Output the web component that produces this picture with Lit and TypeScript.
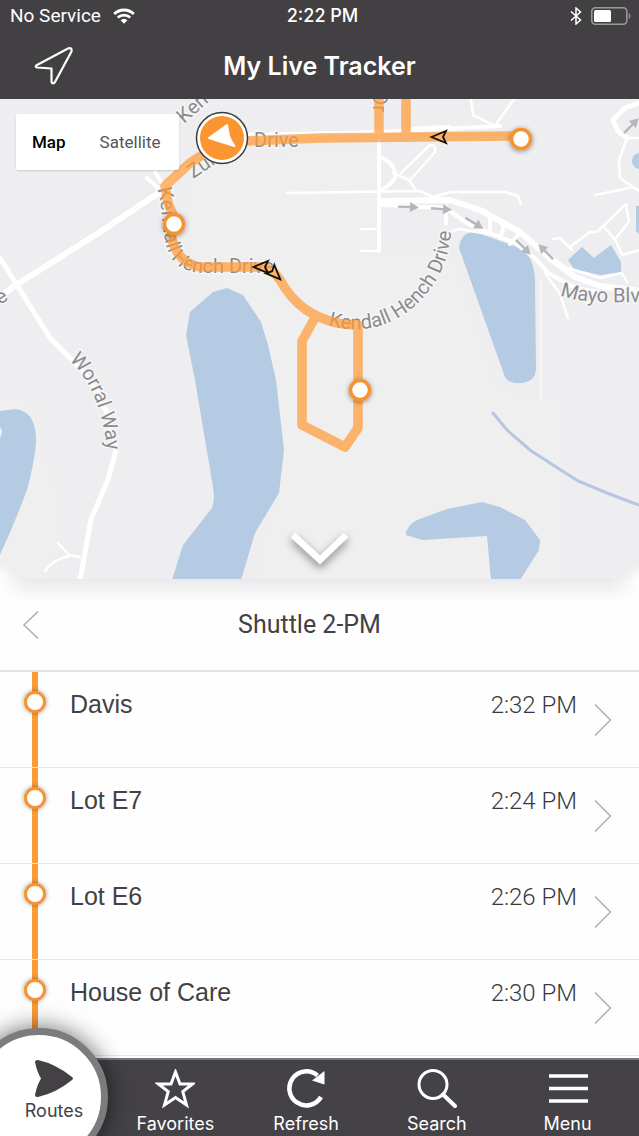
import { LitElement, html, svg, css } from "lit";
import { customElement, property, state } from "lit/decorators.js";
import { classMap } from "lit/directives/class-map.js";

interface Stop {
  name: string;
  time: string;
}

const STOPS: Stop[] = [
  { name: "Davis", time: "2:32 PM" },
  { name: "Lot E7", time: "2:24 PM" },
  { name: "Lot E6", time: "2:26 PM" },
  { name: "House of Care", time: "2:30 PM" },
];

@customElement("status-bar")
class StatusBar extends LitElement {
  static styles = css`
    :host {
      display: grid;
      grid-template-columns: 1fr auto 1fr;
      align-items: center;
      height: 32px;
      padding: 0 4px 0 10px;
      color: #fff;
      font: 400 18px/24px Inter, "Liberation Sans", sans-serif;
    }
    .side {
      display: flex;
      align-items: center;
      gap: 12px;
    }
    .end {
      justify-content: flex-end;
      gap: 9px;
      padding-right: 4px;
    }
    .carrier {
      font-family: Roboto, sans-serif;
      font-size: 19px;
    }
    .clock {
      font-weight: 500;
    }
    svg {
      display: block;
    }
  `;
  render() {
    return html`
      <div class="side">
        <span class="carrier">No Service</span>
        <svg width="22" height="16" viewBox="0 0 22 16" fill="none" stroke="#fff" stroke-width="2.8" aria-label="Wi-Fi">
          <path d="M1.2 6A14 14 0 0 1 20.800 6" />
          <path d="M4.800 9.600A9 9 0 0 1 17.200 9.600" />
          <path d="M11 15.800L7.600 12.300A5 5 0 0 1 14.400 12.300Z" fill="#fff" stroke="none" />
        </svg>
      </div>
      <time class="clock">2:22 PM</time>
      <div class="side end">
        <svg width="12" height="18" viewBox="0 0 12 18" fill="none" stroke="#fff" stroke-width="1.500" aria-label="Bluetooth">
          <path d="M1 4.500L10.500 13L6 17V1L10.500 5L1 13.500" />
        </svg>
        <svg width="40" height="18" viewBox="0 0 40 18" fill="none" aria-label="Battery">
          <rect x="0.800" y="0.800" width="35" height="16.400" rx="3.500" stroke="#9b999c" stroke-width="1.500" />
          <rect x="3" y="3" width="17" height="12" rx="1.500" fill="#fff" />
          <path d="M37.800 6V12C39.800 11 39.800 7 37.800 6Z" fill="#9b999c" />
        </svg>
      </div>
    `;
  }
}

@customElement("route-map")
class RouteMap extends LitElement {
  @state() private view = "Map";

  static styles = css`
    :host {
      display: block;
      position: relative;
      overflow: hidden;
      background: #eeedef;
      min-height: 240px;
    }
    .canvas {
      position: absolute;
      inset: 0;
      width: 100%;
      height: 100%;
    }
    .label {
      font: 400 20px Roboto, sans-serif;
      fill: #8b8b8d;
      stroke: #f6f6f7;
      stroke-width: 3px;
      paint-order: stroke;
    }
    .views {
      position: absolute;
      left: 16px;
      top: 15px;
      display: flex;
      background: #fff;
      border-radius: 2px;
      box-shadow: 0 1px 2px rgba(0, 0, 0, 0.15);
    }
    .view {
      border: 0;
      background: none;
      padding: 16px;
      color: #565656;
      font: 400 17px/24px Roboto, sans-serif;
    }
    .view:last-child {
      padding: 16px 18px;
    }
    .view.on {
      color: #000;
      font-weight: 500;
    }
    .collapse {
      position: absolute;
      left: 0;
      right: 0;
      bottom: 6px;
      width: 72px;
      margin: 0 auto;
      padding: 0;
      border: 0;
      background: none;
    }
    .collapse svg {
      display: block;
      width: 72px;
      height: 48px;
      filter: drop-shadow(0 4px 4px rgba(0, 0, 0, 0.45));
    }
  `;

  private stop(x: number, y: number) {
    return svg`<g filter="url(#soft)"><circle cx=${x} cy=${y} r="9.500" fill="#fff" stroke="#f6932f" stroke-width="3.500"/></g>`;
  }

  private oneWay(x: number, y: number, angle: number) {
    return svg`<path transform="translate(${x} ${y}) rotate(${angle})" d="M-10 -1.200H2V-5L11 0L2 5V1.200H-10Z" fill="#b4b8bd"/>`;
  }

  private heading(x: number, y: number, angle: number) {
    return svg`<path transform="translate(${x} ${y}) rotate(${angle})" d="M-7.500 0L7 -6L4 0L7 6Z" fill="none" stroke="#17120c" stroke-width="1.800"/>`;
  }

  render() {
    return html`
      <svg class="canvas" viewBox="0 99 639 480" preserveAspectRatio="xMidYMid slice" role="img" aria-label="Route map">
        <defs>
          <filter id="soft" x="-60%" y="-60%" width="220%" height="220%">
            <feDropShadow dx="0" dy="1" stdDeviation="2.500" flood-color="#000" flood-opacity="0.450" />
          </filter>
          <path id="hench-west" d="M156 186C163 202 161 222 165 240C169 264 184 273 206 273H300" />
          <path id="hench-east" d="M328 325C362 335 392 327 417 304C440 282 451 256 452 220" />
          <path id="worral" d="M69 360C88 377 104 407 108 460" />
          <path id="mayo" d="M560 295C578 302 600 304 670 301" />
        </defs>

        <g fill="#efefef">
          <path d="M190 160L380 145V250L452 256L500 390L560 400V579H255L284 450L262 325L190 260Z" />
          <path d="M0 400H30L65 520L50 579H0Z" />
        </g>

        <g fill="#b5cae3">
          <path d="M190 312L213 292L227 288L243 295L261 322L268 345L276 380L284 450L279 493L255 533L241 580H172L183 545L212 508Q215 500 213 487L195 380L186 335Z" />
          <path d="M0 411L15 409Q28 410 33 422Q36 430 36 440Q36 455 27 490Q15 522 0 555V438Q4 432 0 427Z" />
          <path d="M459 248Q460 239 465 235Q470 231 478 233L517 247Q529 253 532 263Q535 272 535 280L536 370Q535 381 523 383H515Q508 382 505 377Z" />
          <path d="M406 532Q410 523 417 520L447 509L482 502L500 507L525 520L540 540L539 550L520 580H491L487 536L422 540L406 535Z" />
          <path d="M568 260L582 247L594 258L611 245L621 262V272L600 275L574 269Z" />
          <circle cx="640" cy="161" r="8" />
          <path d="M636 206H640V235L636 231Z" />
        </g>
        <path d="M493 413L507 430L530 450L553 465L578 481L607 493L639 505" fill="none" stroke="#b6c6e2" stroke-width="3" stroke-linecap="round" />

        <g fill="none" stroke="#fff" stroke-linecap="round" stroke-linejoin="round">
          <g stroke-width="6">
            <path d="M-4 299L16 285L100 232L157 194L188 166" />
            <path d="M0 258L17 285L50 338L74 362Q108 395 116 450L108 480L91 519L80 580" stroke-width="5" />
            <path d="M382 201L450 200L480 210L520 232L550 258L575 277L600 286L640 291" />
            <path d="M639 103L625 108L613 120L618 131L627 138" stroke-width="5" />
          </g>
          <g stroke-width="4">
            <path d="M379 140V251" />
            <path d="M382 205L445 208L470 225L515 243L535 258L548 273L575 288L600 292" />
            <path d="M446 207V224M490 218L490 232M505 223L500 238M520 233L510 244" />
            <path d="M147 178L160 190M155 172L164 186" />
            <path d="M240 135L380 132L500 126" />
            <path d="M382 158Q397 165 395 178Q390 186 381 190" />
          </g>
          <g stroke-width="2.500">
            <path d="M361 251H380M361 229H376" />
            <path d="M287 193L420 191L433 197L450 192H505L518 196L521 204" />
            <path d="M471 99L473 115L495 126L514 99M414 128L450 126" />
            <path d="M401 173L430 145Q436 144 435 152L411 179M393 173L409 180L415 189" />
            <path d="M627 138H640M627 138L619 160L620 178L634 188L640 191M595 195L634 187" />
            <path d="M570 247L590 232L597 232L626 204L629 222L615 239L622 255L640 250M605 228L615 240" />
            <path d="M553 239L560 238L572 250M568 268L600 278L622 273L627 282" />
            <path d="M545 273L560 294L568 318" />
            <path d="M450 232L459 229L500 236" />
            <path d="M58 543L69 555L80 557M45 571Q52 560 69 556" />
          </g>
          <path d="M541 280V400" stroke-width="1" />
        </g>

        ${this.oneWay(408, 207, 2)} ${this.oneWay(441, 209, 4)} ${this.oneWay(474, 223, 31)}
        ${this.oneWay(523, 247, 45)} ${this.oneWay(546, 252, 225)} ${this.oneWay(631, 126, -45)}

        <g class="label">
          <text transform="translate(184 124) rotate(-42)">Ken</text>
          <text transform="translate(193 179) rotate(-34)">Zum</text>
          <text x="254" y="147">Drive</text>
          <text transform="translate(373 92) rotate(90)">Dr</text>
          <text transform="translate(0 305) rotate(-32)">e</text>
          <text><textPath href="#hench-west" startOffset="3">Kendall Hench Drive</textPath></text>
          <text><textPath href="#hench-east">Kendall Hench Drive</textPath></text>
          <text><textPath href="#worral">Worral Way</textPath></text>
          <text><textPath href="#mayo">Mayo Blvd</textPath></text>
        </g>

        <g fill="none" stroke="#ff9a36" stroke-width="9.500" stroke-linejoin="round" opacity="0.720">
          <path d="M521 136L420 137L320 138L222 142L190 163L165 186L168 203L173 215Q169 236 175 248Q183 264 200 267H262Q272 268 280 280Q290 298 305 309Q328 325 358 325V428L345 447L302 425V341L316 316M379 99V133M406 99V133" />
        </g>

        ${this.heading(439, 137, 0)} ${this.heading(261, 267, 0)} ${this.heading(275, 274, 225)}
        ${this.stop(521, 139)} ${this.stop(174, 224)} ${this.stop(360, 390)}

        <circle cx="222" cy="138" r="25.500" fill="#fff" stroke="#3c3a3c" stroke-width="1.500" />
        <circle cx="222" cy="138" r="22" fill="#fb952f" />
        <path d="M209 138L227 125Q228 131 229 136Q231 141 234.500 146Q221 142 209 138Z" fill="#fff" stroke="#fff" stroke-width="2" stroke-linejoin="round" />
      </svg>

      <div class="views">
        ${["Map", "Satellite"].map(
          (name) => html`<button class=${classMap({ view: true, on: this.view === name })} @click=${() => (this.view = name)}>${name}</button>`
        )}
      </div>
      <button class="collapse" aria-label="Collapse map">
        <svg viewBox="0 0 72 48" fill="none" stroke="#fff" stroke-width="6.500">
          <path d="M9 10L36 35L62 10" />
        </svg>
      </button>
    `;
  }
}

@customElement("stop-list")
class StopList extends LitElement {
  @property({ attribute: false }) stops: Stop[] = [];

  static styles = css`
    :host {
      display: block;
      position: relative;
      background: #fefefe;
      color: #434144;
    }
    .fade {
      position: absolute;
      left: 0;
      right: 0;
      top: 0;
      height: 24px;
      background: linear-gradient(#eaeaec, #fefefe);
      mask-image: linear-gradient(to right, transparent, #000 28px, #000 calc(100% - 28px), transparent);
    }
    .corners {
      position: absolute;
      left: 0;
      right: 0;
      top: -16px;
      height: 16px;
      background: radial-gradient(circle at 0 100%, #fff, transparent 15px), radial-gradient(circle at 100% 100%, #fff, transparent 15px);
    }
    .head {
      position: relative;
      display: grid;
      grid-template-columns: 50px 1fr 70px;
      align-items: center;
      height: 91px;
      border-bottom: 2px solid #e3e2e6;
    }
    .back {
      border: 0;
      padding: 0 0 0 22px;
      background: none;
    }
    svg {
      display: block;
      fill: none;
      stroke: #aeadb2;
      stroke-width: 1.5;
    }
    .title {
      margin: 0;
      text-align: center;
      font: 400 25px/32px Roboto, sans-serif;
    }
    .rows {
      margin: 0;
      padding: 0 0 2px;
      list-style: none;
    }
    .row {
      display: grid;
      grid-template-columns: 70px 1fr auto 62px;
      box-sizing: border-box;
      height: 96px;
      border-bottom: 1px solid #e6e5e9;
      color: inherit;
      text-decoration: none;
    }
    .track {
      display: flex;
      justify-content: center;
      width: 6px;
      margin-left: 32px;
      background: #fa9c3a;
    }
    .dot {
      flex: none;
      box-sizing: border-box;
      width: 22px;
      height: 22px;
      margin-top: 19px;
      border: 3px solid #f6952f;
      border-radius: 50%;
      background: #fff;
      box-shadow: 0 0 5px rgba(0, 0, 0, 0.4);
    }
    .name {
      padding-top: 16px;
      font: 400 25px/32px "Liberation Sans", Arial, sans-serif;
    }
    .time {
      padding-top: 17px;
      color: #39373a;
      font: 300 24px/32px Roboto, sans-serif;
    }
    .go {
      align-self: center;
      margin-left: 17px;
    }
  `;

  render() {
    return html`
      <div class="corners"></div>
      <div class="fade"></div>
      <div class="head">
        <button class="back" aria-label="Previous route">
          <svg width="17" height="28" viewBox="0 0 17 28"><path d="M16 0.500L2 14L16 27.500" /></svg>
        </button>
        <h2 class="title">Shuttle 2-PM</h2>
      </div>
      <ul class="rows">
        ${this.stops.map(
          (stop) => html`<li>
            <a class="row" href="#">
              <span class="track"><span class="dot"></span></span>
              <span class="name">${stop.name}</span>
              <span class="time">${stop.time}</span>
              <svg class="go" width="18" height="32" viewBox="0 0 18 32"><path d="M1 0.500L16.500 16L1 31.500" /></svg>
            </a>
          </li>`
        )}
      </ul>
    `;
  }
}

const TABS = [
  {
    label: "Favorites",
    icon: svg`<path d="M20.500 3L25 15H37.500L27.800 22.600L31.500 36L20.500 28.500L9.500 36L13.200 22.600L3.500 15H16Z" stroke-width="3"/>`,
  },
  {
    label: "Refresh",
    icon: svg`<path d="M35 28A17 17 0 1 1 31.500 6.500" stroke-width="4.500"/><path d="M38.500 2V15.500L26 11.500Z" fill="#fff" stroke="none"/>`,
  },
  {
    label: "Search",
    icon: svg`<circle cx="16" cy="15.500" r="14" stroke-width="3"/><path d="M26 25.500L38 37" stroke-width="4" stroke-linecap="round"/>`,
  },
  {
    label: "Menu",
    icon: svg`<path d="M1 7H40M1 19.500H40M1 32H40" stroke-width="3.500"/>`,
  },
];

@customElement("tab-bar")
class TabBar extends LitElement {
  static styles = css`
    :host {
      display: block;
      position: relative;
      color: #fff;
      background: #444246;
      font: 400 18px/22px Inter, sans-serif;
    }
    .bar {
      position: relative;
      display: grid;
      grid-template-columns: 110px repeat(4, 1fr);
      height: 78px;
      padding-right: 6px;
      overflow: clip;
      overflow-clip-margin: 80px;
      box-sizing: border-box;
      border-top: 2px solid #79777b;
    }
    .tab {
      display: flex;
      flex-direction: column;
      align-items: center;
      gap: 4px;
      padding: 9px 0 0;
      border: 0;
      background: none;
      color: inherit;
      font: inherit;
    }
    .icon {
      display: block;
      width: 40px;
      height: 40px;
      fill: none;
      stroke: #fff;
    }
    .bubble {
      position: absolute;
      left: -30px;
      top: -32px;
      width: 138px;
      height: 138px;
      box-sizing: border-box;
      border: 7px solid #7c7b7d;
      border-radius: 50%;
      background: #fff;
      box-shadow: 0 0 24px rgba(0, 0, 0, 0.6);
    }
    .current {
      position: relative;
      padding: 0 2px 15px 0;
      justify-content: center;
      color: #434144;
      gap: 2px;
    }
    .pointer {
      display: block;
      width: 40px;
      height: 38px;
      fill: #434144;
    }
  `;
  render() {
    return html`
      <nav class="bar">
        <div class="bubble"></div>
        <button class="tab current">
          <svg class="pointer" viewBox="0 0 40 38"><path d="M1 2Q1 0 4 0Q22 4 38 17Q40 18.500 38 20Q22 33 4 37Q1 37.500 1 35Q3 25 7 18.500Q3 12 1 2Z" /></svg>
          <span>Routes</span>
        </button>
        ${TABS.map((tab) => html`<button class="tab"><svg class="icon" viewBox="0 0 40 40">${tab.icon}</svg><span>${tab.label}</span></button>`)}
      </nav>
    `;
  }
}

@customElement("app-root")
class AppRoot extends LitElement {
  static styles = css`
    :host {
      display: flex;
      flex-direction: column;
      min-height: 100vh;
      overflow-x: hidden;
      background: #fefefe;
    }
    .top {
      background: #424042;
      color: #fff;
    }
    .heading {
      display: grid;
      grid-template-columns: 108px 1fr 108px;
      align-items: center;
      height: 67px;
    }
    .locate {
      display: flex;
      justify-content: center;
      padding: 0;
      border: 0;
      background: none;
    }
    .name {
      margin: 0;
      text-align: center;
      font: 600 25px/32px Inter, sans-serif;
    }
    .map {
      flex: 1;
    }
  `;
  render() {
    return html`
      <header class="top">
        <status-bar></status-bar>
        <div class="heading">
          <button class="locate" aria-label="My location">
            <svg width="40" height="40" viewBox="0 0 40 40" fill="none" stroke="#fff" stroke-width="2.200" stroke-linejoin="round">
              <path d="M3 19L34 2.500Q38.500 1 37.500 5.500L21 36Q18.500 39 17.500 36V22.500L3 21.500Q0.500 20.500 3 19Z" />
            </svg>
          </button>
          <h1 class="name">My Live Tracker</h1>
        </div>
      </header>
      <route-map class="map"></route-map>
      <stop-list .stops=${STOPS}></stop-list>
      <tab-bar></tab-bar>
    `;
  }
}
